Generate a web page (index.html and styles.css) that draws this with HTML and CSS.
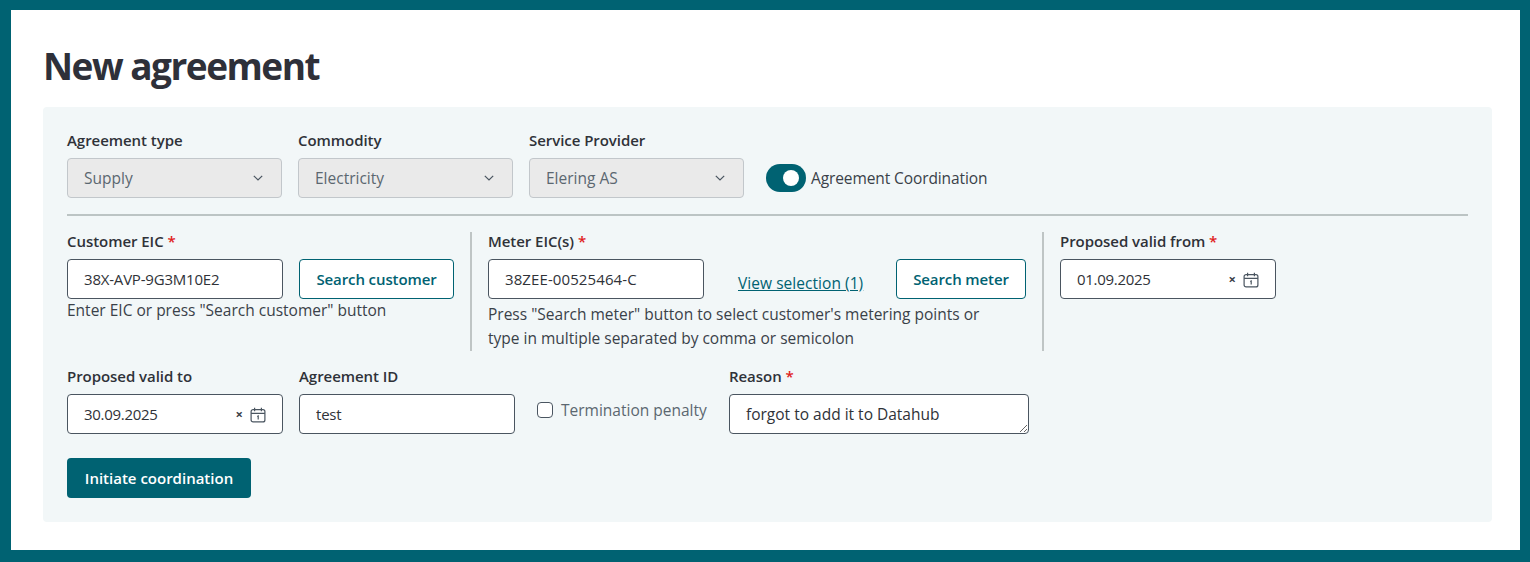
FILE: index.html
```html
<!DOCTYPE html>
<html lang="en">
<head>
<meta charset="utf-8">
<title>New agreement</title>
<link rel="stylesheet" href="styles.css">
</head>
<body>
<div class="frame">
  <h1 class="title">New agreement</h1>
  <form class="panel">
    <div class="row">
      <div class="field w215">
        <label class="label">Agreement type</label>
        <div class="select"><span>Supply</span><svg class="chev" viewBox="0 0 10 6" width="10" height="6"><path d="M.8.8 5 5l4.2-4.2" fill="none" stroke="currentColor" stroke-width="1.2"/></svg></div>
      </div>
      <div class="field w215">
        <label class="label">Commodity</label>
        <div class="select"><span>Electricity</span><svg class="chev" viewBox="0 0 10 6" width="10" height="6"><path d="M.8.8 5 5l4.2-4.2" fill="none" stroke="currentColor" stroke-width="1.2"/></svg></div>
      </div>
      <div class="field w215">
        <label class="label">Service Provider</label>
        <div class="select"><span>Elering AS</span><svg class="chev" viewBox="0 0 10 6" width="10" height="6"><path d="M.8.8 5 5l4.2-4.2" fill="none" stroke="currentColor" stroke-width="1.2"/></svg></div>
      </div>
      <div class="toggle-wrap">
        <span class="toggle"><span class="knob"></span></span>
        <span class="toggle-label">Agreement Coordination</span>
      </div>
    </div>
    <hr class="rule">
    <div class="row row-main">
      <div class="col col-customer">
        <label class="label">Customer EIC <span class="req">*</span></label>
        <div class="inline">
          <input class="input w216" type="text" value="38X-AVP-9G3M10E2">
          <button class="btn-outline btn-customer" type="button">Search customer</button>
        </div>
        <p class="help help-tight">Enter EIC or press "Search customer" button</p>
      </div>
      <div class="divider"></div>
      <div class="col col-meter">
        <label class="label">Meter EIC(s) <span class="req">*</span></label>
        <div class="inline">
          <input class="input w216 input-meter" type="text" value="38ZEE-00525464-C">
          <a class="link" href="#">View selection (1)</a>
          <button class="btn-outline btn-meter" type="button">Search meter</button>
        </div>
        <p class="help">Press "Search meter" button to select customer's metering points or<br>type in multiple separated by comma or semicolon</p>
      </div>
      <div class="divider"></div>
      <div class="col">
        <label class="label">Proposed valid from <span class="req">*</span></label>
        <div class="date">
          <span class="date-value">01.09.2025</span>
          <span class="clear">×</span>
          <svg class="cal" viewBox="0 0 16 16" width="16" height="16"><g fill="none" stroke="currentColor" stroke-width="1.2"><rect x="1.1" y="2.6" width="13.8" height="12.3" rx="2"/><path d="M1.1 6.3h13.8M4.6.8v3.4M11.4.8v3.4"/><path d="M7.2 9.6 8.2 9v3.6"/></g></svg>
        </div>
      </div>
    </div>
    <div class="row row-third">
      <div class="field w216">
        <label class="label">Proposed valid to</label>
        <div class="date">
          <span class="date-value">30.09.2025</span>
          <span class="clear">×</span>
          <svg class="cal" viewBox="0 0 16 16" width="16" height="16"><g fill="none" stroke="currentColor" stroke-width="1.2"><rect x="1.1" y="2.6" width="13.8" height="12.3" rx="2"/><path d="M1.1 6.3h13.8M4.6.8v3.4M11.4.8v3.4"/><path d="M7.2 9.6 8.2 9v3.6"/></g></svg>
        </div>
      </div>
      <div class="field w216">
        <label class="label">Agreement ID</label>
        <input class="input" type="text" value="test">
      </div>
      <label class="check">
        <input class="checkbox" type="checkbox">
        <span>Termination penalty</span>
      </label>
      <div class="field w300">
        <label class="label">Reason <span class="req">*</span></label>
        <textarea class="textarea">forgot to add it to Datahub</textarea>
      </div>
    </div>
    <button class="btn-primary" type="button">Initiate coordination</button>
  </form>
</div>
</body>
</html>
```
FILE: styles.css
```css
* { box-sizing: border-box; }
html, body { margin: 0; padding: 0; }
body {
  font-family: "Open Sans", "Noto Sans", sans-serif;
  font-size: 15.5px;
  line-height: 24px;
  color: #2f3238;
  background: #fff;
}
.frame {
  height: 562px;
  border-style: solid;
  border-color: #006272;
  border-width: 10px 10px 12px 11px;
  padding: 0 28px 0 32px;
  overflow: hidden;
}
.title {
  margin: 28px 0 0;
  height: 69px;
  font-size: 37px;
  line-height: 56px;
  font-weight: 700;
  letter-spacing: -1.5px;
  color: #2e3039;
}
.panel {
  background: #f2f7f8;
  border-radius: 4px;
  padding: 21px 24px 24px;
  height: 415px;
}
.row { display: flex; gap: 16px; }
.field { display: flex; flex-direction: column; }
.w215 { width: 215px; }
.w216 { width: 216px; }
.w300 { width: 300px; }
.label {
  display: block;
  height: 24px;
  margin-bottom: 6px;
  font-size: 15px;
  line-height: 25px;
  font-weight: 600;
  letter-spacing: -.05px;
  white-space: nowrap;
}
.req { color: #e0201b; }
.select {
  height: 40px;
  display: flex;
  align-items: center;
  justify-content: space-between;
  padding: 0 18px 1px 16px;
  background: #eaeaea;
  border: 1px solid #c2c7cb;
  border-radius: 4px;
  color: #5b6770;
}
.chev { color: #4a5560; margin-top: 1px; }
.toggle-wrap {
  display: flex;
  align-items: center;
  gap: 5px;
  height: 28px;
  margin: 36px 0 0 6px;
}
.toggle {
  display: flex;
  align-items: center;
  justify-content: flex-end;
  width: 40px;
  height: 28px;
  padding-right: 7px;
  border-radius: 14px;
  background: #006272;
}
.knob { width: 16px; height: 16px; border-radius: 50%; background: #fff; }
.toggle-label { letter-spacing: -.1px; white-space: nowrap; color: #3a4149; }
.rule {
  height: 2px;
  margin: 16px 0 13px;
  border: 0;
  background: #bcc4c4;
}
.row-main { height: 122px; }
.col { display: flex; flex-direction: column; }
.col-customer { width: 387px; }
.col-meter { width: 538px; }
.inline { display: flex; align-items: stretch; }
.divider { width: 2px; height: 119px; margin-top: 3px; background: #bfc5c5; }
.input {
  height: 40px;
  width: 100%;
  padding: 0 16px;
  border: 1px solid #4a5560;
  border-radius: 4px;
  background: #fff;
  font: inherit;
  font-size: 15px;
  letter-spacing: -.2px;
  color: #2f3238;
}
.inline .w216 { width: 216px; flex: none; }
.inline .input-meter { letter-spacing: .1px; }
.btn-outline {
  height: 40px;
  border: 1px solid #006272;
  border-radius: 4px;
  background: #fff;
  color: #006272;
  font: inherit;
  font-size: 15px;
  font-weight: 600;
  letter-spacing: -.1px;
  padding: 0;
  white-space: nowrap;
}
.btn-customer { width: 155px; margin-left: 16px; }
.btn-meter { width: 130px; }
.link {
  width: 192px;
  padding: 12px 0 0 34px;
  color: #006272;
  white-space: nowrap;
  letter-spacing: .05px;
}
.help { margin: 3px 0 0; color: #3a4149; white-space: nowrap; }
.help-tight { margin-top: -1px; }
.date {
  display: flex;
  align-items: center;
  width: 216px;
  height: 40px;
  padding: 0 16px 0 16px;
  border: 1px solid #4a5560;
  border-radius: 4px;
  background: #fff;
}
.date-value { flex: 1; margin-top: -1px; font-size: 15px; letter-spacing: -.3px; }
.clear { font-size: 13px; font-weight: 700; margin-right: 7px; line-height: 16px; color: #3a4149; }
.cal { color: #4a5560; margin-top: 2px; }
.row-third { margin-top: 13px; height: 70px; }
.check {
  display: flex;
  align-items: center;
  gap: 8px;
  width: 176px;
  height: 32px;
  margin: 30px 0 0 6px;
  color: #5b6770;
  white-space: nowrap;
}
.check span { margin-top: -1px; }
.checkbox {
  appearance: none;
  width: 16px;
  height: 16px;
  margin: 0;
  flex: none;
  border: 1px solid #4a5560;
  border-radius: 4px;
  background: #fff;
}
.textarea {
  height: 40px;
  width: 300px;
  padding: 7px 16px;
  border: 1px solid #4a5560;
  border-radius: 4px;
  background: #fff;
  font: inherit;
  color: #2f3238;
  display: block;
}
.btn-primary {
  display: block;
  width: 184px;
  height: 40px;
  margin-top: 24px;
  padding: 0;
  border: 0;
  border-radius: 4px;
  background: #006272;
  color: #fff;
  font: inherit;
  font-size: 15px;
  font-weight: 600;
}
```
